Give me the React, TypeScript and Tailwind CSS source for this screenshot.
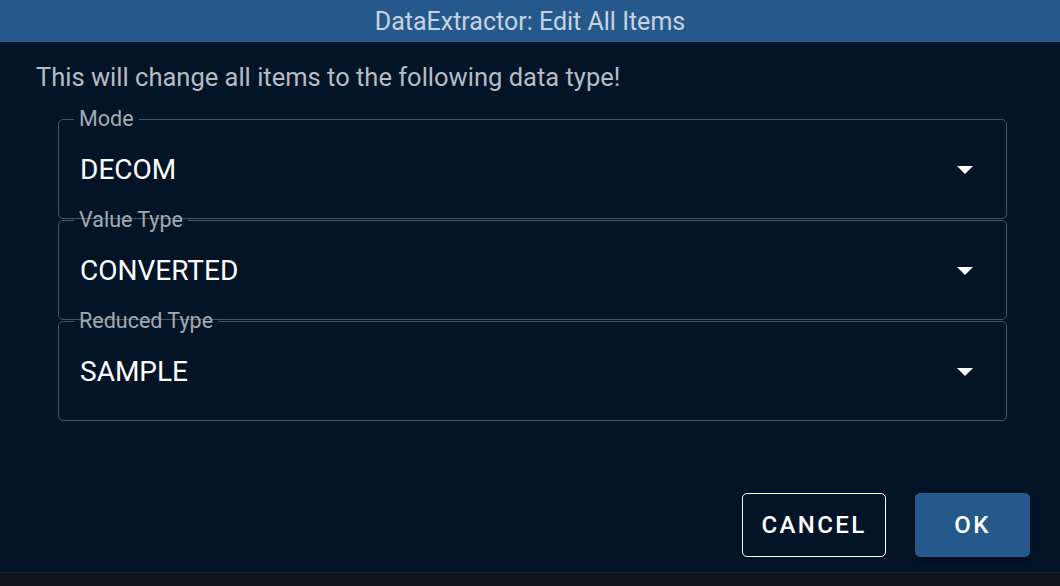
import React from "react";

const fields = [
  { label: "Mode", value: "DECOM" },
  { label: "Value Type", value: "CONVERTED" },
  { label: "Reduced Type", value: "SAMPLE" },
];

function Caret() {
  return (
    <svg width="16" height="8" viewBox="0 0 16 8" aria-hidden>
      <path d="M0 0h16l-8 8z" fill="#ffffff" />
    </svg>
  );
}

function SelectField({ label, value, first }: { label: string; value: string; first?: boolean }) {
  return (
    <fieldset
      className={`min-w-0 rounded-[5px] border border-[#4a5562] pl-[15px] pr-[33px] ${first ? "" : "-mt-[9px]"}`}
    >
      <legend className="px-[5px] text-[21.5px] leading-[20px] text-[#a3aab3]">{label}</legend>
      <div className="flex h-[89px] items-center justify-between pb-[8px] pl-[6px]">
        <span className="text-[28px] leading-[32px] text-white">{value}</span>
        <Caret />
      </div>
    </fieldset>
  );
}

export default function App() {
  return (
    <div className="flex h-[586px] w-[1060px] flex-col overflow-hidden bg-[#041427] font-['Roboto',sans-serif]">
      <div className="flex h-[42px] shrink-0 items-center justify-center bg-[#26598b] pt-[2px] text-[25px] text-[#c6d3e2]">
        DataExtractor: Edit All Items
      </div>

      <div className="flex flex-1 flex-col pt-[20px]">
        <p className="pl-[36px] text-[25.5px] leading-[30px] text-[#b6bcc4]">
          This will change all items to the following data type!
        </p>

        <div className="ml-[58px] mt-[17px] flex w-[949px] flex-col">
          {fields.map((f, i) => (
            <SelectField key={f.label} label={f.label} value={f.value} first={i === 0} />
          ))}
        </div>

        <div className="mr-[30px] mt-[72px] flex justify-end gap-[29px]">
          <button className="h-[64px] w-[144px] rounded-[5px] border border-white text-[24px] font-medium tracking-[0.1em] text-white">
            CANCEL
          </button>
          <button className="h-[64px] w-[115px] rounded-[5px] bg-[#26598b] text-[24px] font-medium tracking-[0.1em] text-white shadow-[0_2px_4px_rgba(0,0,0,0.4)]">
            OK
          </button>
        </div>
      </div>

      <div className="h-[14px] shrink-0 border-t border-[#1c222b] bg-[#0f141b]" />
    </div>
  );
}
